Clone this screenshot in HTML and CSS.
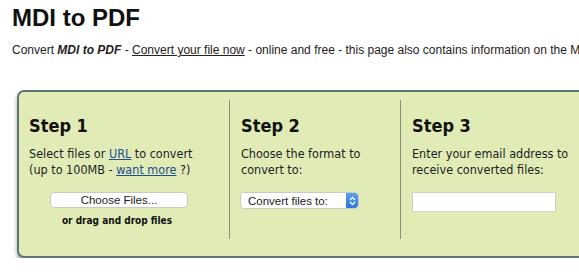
FILE: index.html
```html
<!DOCTYPE html>
<html>
<head>
<meta charset="utf-8">
<title>MDI to PDF</title>
<link rel="stylesheet" href="styles.css">
</head>
<body>
<h1 class="title">MDI to PDF</h1>
<p class="intro">Convert <b><i>MDI to PDF</i></b> - <a href="#" class="intro-link">Convert your file now</a> - online and free - this page also contains information on the MDI and PDF file extensions.</p>
<div class="box">
  <div class="step step-1">
    <h2 class="step-title">Step 1</h2>
    <p class="step-text">Select files or <a href="#" class="blue-link">URL</a> to convert<br>(up to 100MB - <a href="#" class="blue-link">want more</a> ?)</p>
    <div class="choose-btn">Choose Files...</div>
    <div class="drag">or drag and drop files</div>
  </div>
  <div class="step">
    <h2 class="step-title">Step 2</h2>
    <p class="step-text">Choose the format to<br>convert to:</p>
    <div class="select">
      <span class="select-label">Convert files to:</span>
      <span class="stepper"><svg width="7" height="10" viewBox="0 0 7 10"><path d="M1 4 L3.5 1.5 L6 4 M1 6 L3.5 8.5 L6 6" fill="none" stroke="#fff" stroke-width="1.3"/></svg></span>
    </div>
  </div>
  <div class="step">
    <h2 class="step-title">Step 3</h2>
    <p class="step-text">Enter your email address to<br>receive converted files:</p>
    <div class="email"></div>
  </div>
</div>
</body>
</html>
```
FILE: styles.css
```css
html, body {
  overflow: hidden;
}
body {
  margin: 0;
  padding: 0 0 0 12px;
  background: #fff;
  font-family: "Liberation Sans", Arial, sans-serif;
  color: #222;
}
.title {
  margin: 4px 0 0;
  font-size: 24px;
  line-height: 28px;
  font-weight: bold;
  color: #111;
}
.intro {
  margin: 10px 0 0;
  font-size: 12px;
  line-height: 16px;
  white-space: nowrap;
}
.intro-link {
  color: #222;
}
.box {
  margin: 32px 0 0 5px;
  width: 640px;
  height: 164px;
  border: 2px solid #5e7577;
  border-radius: 7px;
  background: #e0ebb6;
  box-shadow: 0 3px 4px rgba(40, 50, 60, 0.45);
  display: grid;
  grid-template-columns: 210px 171px 1fr;
  font-family: "DejaVu Sans Condensed", "DejaVu Sans", sans-serif;
  font-stretch: condensed;
  color: #1e1e1e;
}
.step {
  margin: 8px 0 0;
  height: 139px;
  border-left: 1px solid #8a8f78;
  padding: 15px 0 0 11px;
  box-sizing: border-box;
}
.step-1 {
  border-left: none;
  padding: 15px 20px 0 10px;
}
.step-title {
  margin: 0;
  font-size: 18px;
  line-height: 22px;
  font-weight: bold;
  color: #111;
}
.step-text {
  margin: 9px 0 0;
  font-size: 12.5px;
  line-height: 16px;
}
.blue-link {
  color: #1d4f8c;
}
.choose-btn {
  margin: 14px auto 0;
  width: 138px;
  height: 16px;
  box-sizing: border-box;
  background: #fff;
  border: 1px solid #c9cbc0;
  border-radius: 4px;
  font-family: "Liberation Sans", Arial, sans-serif;
  font-size: 11.5px;
  line-height: 14px;
  text-align: center;
  color: #222;
}
.drag {
  margin: 6px 0 0 -4px;
  font-size: 10px;
  line-height: 14px;
  font-weight: bold;
  text-align: center;
  color: #111;
}
.select {
  margin: 14px 0 0 -1px;
  width: 119px;
  height: 17px;
  box-sizing: border-box;
  background: #fff;
  border: 1px solid #c9cbc0;
  border-radius: 4px;
  display: flex;
  align-items: center;
  justify-content: space-between;
  font-family: "Liberation Sans", Arial, sans-serif;
  font-size: 11.5px;
  color: #222;
  overflow: hidden;
}
.select-label {
  padding-left: 7px;
}
.stepper {
  width: 12px;
  height: 15px;
  background: linear-gradient(#5aa0f0, #2a76dc);
  border-radius: 0 3px 3px 0;
  display: flex;
  align-items: center;
  justify-content: center;
}
.email {
  margin: 14px 0 0;
  width: 144px;
  height: 20px;
  box-sizing: border-box;
  background: #fff;
  border: 1px solid #cfd2c2;
}
```
